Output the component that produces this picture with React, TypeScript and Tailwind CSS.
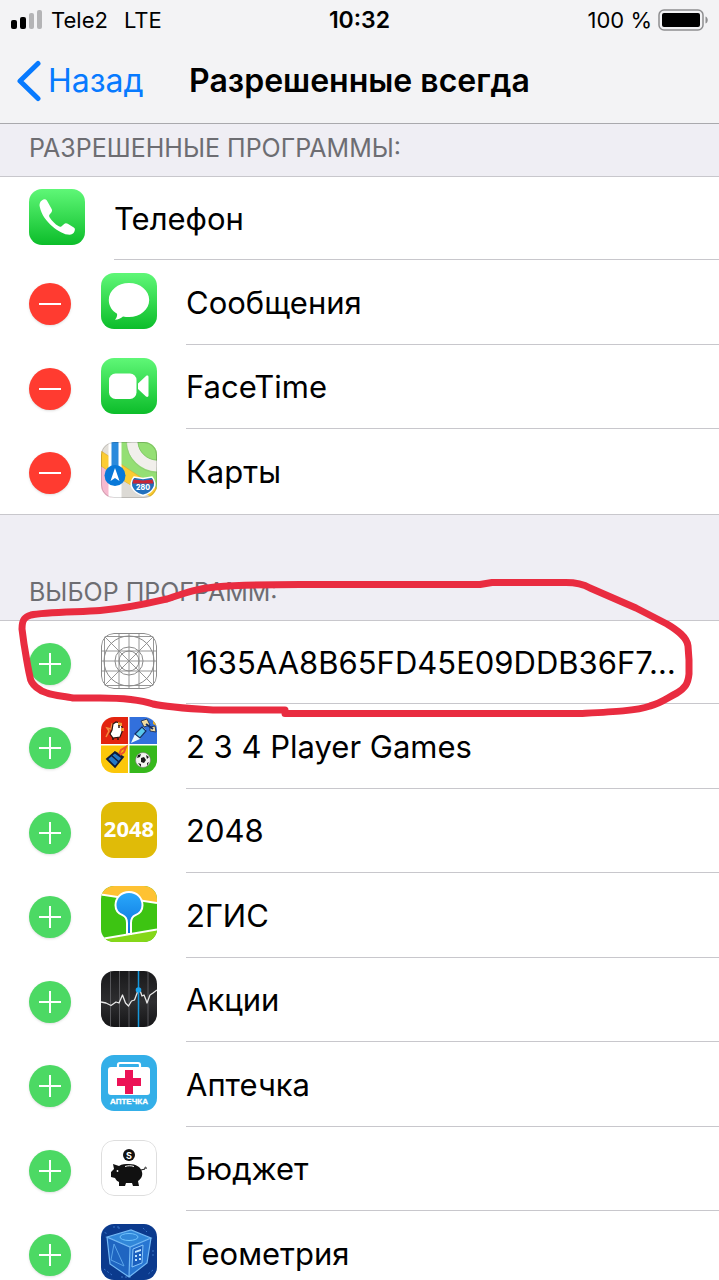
import React from "react"

interface App {
    name: string
    icon: React.ReactNode
}

const clip = "size-14 shrink-0 rounded-[13px]"

const GreenDefs = ({ id }: { id: string }) => (
    <defs>
        <linearGradient id={id} x1="0" y1="0" x2="0" y2="1">
            <stop offset="0" stopColor="#5ff777" />
            <stop offset="1" stopColor="#0cbd2a" />
        </linearGradient>
    </defs>
)

const PhoneIcon = () => (
    <svg viewBox="0 0 56 56" className={clip} aria-hidden="true">
        <GreenDefs id="phone" />
        <rect width="56" height="56" fill="url(#phone)" />
        <path d="M15.5 10.2C12 10.8 9.9 14 10.8 18c1.6 7.6 6.6 14.4 12.7 19.5 5.4 4.5 11.6 8.3 17.3 8.3 2.800 0 4.9-2.3 5.1-5.2.1-1.200-.5-1.800-1.500-2.400l-5.600-3.400c-1.500-.9-2.700-.7-3.900.4l-2.300 2c-.9.8-2 .7-3.200-.1-3.200-2.100-6.600-5.400-8.700-8.700-.8-1.200-.8-2.200.1-3.200l1.500-1.800c.9-1.100 1-2.300.2-3.600l-3.900-7.100c-.8-1.500-1.500-2.700-3.100-2.500z" fill="#fff" />
    </svg>
)

const MessagesIcon = () => (
    <svg viewBox="0 0 56 56" className={clip} aria-hidden="true">
        <GreenDefs id="messages" />
        <rect width="56" height="56" fill="url(#messages)" />
        <path d="M28 10C16.8 10 7.8 17.4 7.8 27c0 5.8 3.2 10.8 8.3 13.8.2 2.4-.5 4.5-2.2 5.9 3.2-.1 6-1.3 8.1-3.3 1.9.4 3.9.6 6 .6 11.2 0 20.2-7.4 20.2-17S39.2 10 28 10z" fill="#fff" />
    </svg>
)

const FaceTimeIcon = () => (
    <svg viewBox="0 0 56 56" className={clip} aria-hidden="true">
        <GreenDefs id="facetime" />
        <rect width="56" height="56" fill="url(#facetime)" />
        <rect x="8" y="15.5" width="27.5" height="25.5" rx="6.5" fill="#fff" />
        <path d="M37 25.5l8-7.400c1-.9 2.500-.5 2.500.9v18.500c0 1.400-1.500 1.800-2.500.9L37 31z" fill="#fff" />
    </svg>
)

const MapsIcon = () => (
    <svg viewBox="0 0 56 56" className={clip} aria-hidden="true">
        <rect width="56" height="56" fill="#e2dfd9" />
        <path d="M20 0h36v48L20 24z" fill="#94df74" />
        <path d="M0 24l20 12v20H0z" fill="#f6b9cf" />
        <path d="M0 9l56 37v10h-7L0 24z" fill="#fbcc33" stroke="#dcae32" strokeWidth=".7" />
        <path d="M20 38l32 18H20z" fill="#dcdad5" />
        <path d="M31 0a26 26 0 0 0 25 24" fill="none" stroke="#f1efeb" strokeWidth="11" />
        <path d="M37 0a19 19 0 0 0 19 18V0z" fill="#94df74" stroke="#77b862" strokeWidth=".6" />
        <path d="M25.5 0A31 31 0 0 0 56 30.5" fill="none" stroke="#8cbf77" strokeWidth=".6" />
        <path d="M7.5 0h13v56h-13z" fill="#fff" />
        <path d="M10.5 0h7v34h-7z" fill="#2a8adc" />
        <circle cx="14" cy="33.5" r="10.5" fill="#0878d8" />
        <path d="M14 26l4.500 13L14 36l-4.500 3z" fill="#fff" />
        <path d="M33 35l9 1.500 9-1.500c3 3 4 9 1 12-2 4-6 5-10 6.500-4-1.500-8-2.500-10-6.500-3-3-2-9 1-12z" fill="#2170bd" stroke="#fff" strokeWidth="1.5" />
        <path d="M32.500 37.500l9.500 1 9.500-1 1 4h-21z" fill="#c72736" />
        <text x="42" y="48" textAnchor="middle" fontFamily="Inter, sans-serif" fontSize="7" fontWeight="800" fill="#fff">280</text>
        <rect x=".5" y=".5" width="55" height="55" rx="12.5" fill="none" stroke="#000" strokeOpacity=".15" />
    </svg>
)

const PlaceholderIcon = () => (
    <svg viewBox="0 0 56 56" className={clip} fill="none" stroke="#8b8b8b" aria-hidden="true">
        <rect x=".5" y=".5" width="55" height="55" rx="12.5" fill="#fff" />
        <path d="M3.5 3v50M18 0v56M28 0v56M38 0v56M52.5 3v50M3 3.5h50M0 18h56M0 28h56M0 38h56M3 52.5h50M4 4l48 48M52 4L4 52" strokeWidth=".9" />
        <circle cx="28" cy="28" r="25" />
        <circle cx="28" cy="28" r="14" />
        <circle cx="28" cy="28" r="10" />
    </svg>
)

const PlayerGamesIcon = () => (
    <svg viewBox="0 0 56 56" className={clip} aria-hidden="true">
        <rect width="56" height="56" fill="#fff" />
        <path d="M0 0h27v27H0z" fill="#e3240f" />
        <path d="M28.5 0H56v27H28.500z" fill="#3270dc" />
        <path d="M0 28.5h27V56H0z" fill="#fcc70a" />
        <path d="M28.5 28.5H56V56H28.500z" fill="#36b81c" />
        {/* chicken */}
        <path d="M5 20l3-6-2-3 4 1 1-5 3 2" fill="none" stroke="#f58b3d" strokeWidth="1.5" />
        <path d="M12 7l3-2 4 1 2 4v5l-2 5-7 1-3-4 2-4z" fill="#fff" stroke="#2d1410" strokeWidth="1.2" />
        <path d="M17 5l4 1v3h-4zM20 11h3v3h-3z" fill="#f0a13a" />
        <path d="M18 8v3M12 21v2M17 21v2" stroke="#2d1410" strokeWidth="1.5" />
        {/* rocket and blocks */}
        <path d="M30 26l4-9 8-7 3 3-6 9z" fill="#eaf8ff" />
        <path d="M34 17l7-7 4 4-6 7z" fill="#59c7ed" stroke="#142e65" strokeWidth="1.2" />
        <path d="M40 4l6-2 3 6-6 2zM49 10l5-1 1 6-6-1z" fill="#f4dc9f" stroke="#27385f" />
        <path d="M47 1l5 1v5l4 2V0h-8z" fill="#e9ad21" />
        <path d="M45 7l7 5" stroke="#172e65" strokeWidth="2" />
        {/* car */}
        <path d="M6 42l8-7 8 5-8 10z" fill="#2679c7" stroke="#101c39" strokeWidth="1.8" />
        <path d="M10 38l8 7M13 35l8 6" stroke="#101c39" strokeWidth="1.5" />
        <path d="M18 37l2-4 5-3-2 5-4 3" fill="none" stroke="#ed5428" strokeWidth="2" />
        {/* ball */}
        <circle cx="42" cy="43" r="7.5" fill="#f4f4f1" stroke="#72736b" strokeWidth=".6" />
        <path d="M40 41l3-1 2 3-2 3-3-1zM37 38l3-1-1 3-3 1zM45 38l3 2-2 2zM37 46l3 1v3zM46 46l2-1-2 4z" fill="#1a1a1a" />
    </svg>
)

const Icon2048 = () => (
    <svg viewBox="0 0 56 56" className={clip} aria-hidden="true">
        <rect width="56" height="56" fill="#e0bb08" />
        <text x="28" y="35" textAnchor="middle" fontFamily="Open Sans, sans-serif" fontSize="22" fontWeight="700" fill="#fff">2048</text>
    </svg>
)

const GisIcon = () => (
    <svg viewBox="0 0 56 56" className={clip} aria-hidden="true">
        <defs>
            <linearGradient id="pin" x1="0" y1="0" x2="0" y2="1">
                <stop offset="0" stopColor="#2aa9fb" />
                <stop offset="1" stopColor="#0a71dc" />
            </linearGradient>
        </defs>
        <rect width="56" height="56" fill="#3dc412" />
        <path d="M0 0h56v17L0 9z" fill="#fec233" />
        <path d="M0 53l56-9v12H0z" fill="#85d719" />
        <path d="M0 8.5L56 17M0 53l56-9.5" stroke="#fff" strokeWidth="2" />
        <path d="M28 6c-8 0-13.5 6-13.5 13.2 0 5 3 8.300 7 10C24.500 30.500 26 33 26 37v11h4V37c0-4 1.500-6.500 4.500-7.800 4-1.700 7-5 7-10C41.500 12 36 6 28 6z" fill="url(#pin)" stroke="#fff" strokeWidth="2" />
    </svg>
)

const StocksIcon = () => (
    <svg viewBox="0 0 56 56" className={clip} aria-hidden="true">
        <defs>
            <linearGradient id="stocks" x1="0" y1="0" x2="0" y2="1">
                <stop offset="0" stopColor="#19191b" />
                <stop offset=".55" stopColor="#2e2e30" />
                <stop offset="1" stopColor="#151517" />
            </linearGradient>
        </defs>
        <rect width="56" height="56" fill="url(#stocks)" />
        <path d="M9.5 0v56M18.5 0v56M28 0v56M47 0v56" stroke="#66666a" strokeWidth=".8" />
        <path d="M37.5 0v56" stroke="#1698dc" strokeWidth="1.5" />
        <path d="M0 31l5 1 5 2.500 5-3.500 3 1 3.500-8 3 8 3 3 3-5 3-1 3-8 2-3 2.500 7 2-1 2 5 1 3 3-8 3-2 4-3" fill="none" stroke="#e8e8e8" strokeWidth="1.3" strokeLinejoin="round" />
        <circle cx="37.5" cy="19" r="2.8" fill="#1ba4ee" />
    </svg>
)

const MedkitIcon = () => (
    <svg viewBox="0 0 56 56" className={clip} aria-hidden="true">
        <rect width="56" height="56" fill="#34afe8" />
        <path d="M17 13v-3q0-2 2-2h18q2 0 2 2v3" fill="none" stroke="#fff" strokeWidth="2.2" />
        <rect x="7" y="12" width="42" height="28" rx="3" fill="#fff" />
        <path d="M24 15h8v8h8v8h-8v8h-8v-8h-8v-8h8z" fill="#ec1256" />
        <text x="28" y="49" textAnchor="middle" fontFamily="Liberation Sans, sans-serif" fontSize="8" fontWeight="700" fill="#fff" stroke="#fff" strokeWidth=".3">АПТЕЧКА</text>
    </svg>
)

const BudgetIcon = () => (
    <svg viewBox="0 0 56 56" className={clip} aria-hidden="true">
        <rect x=".5" y=".5" width="55" height="55" rx="12.5" fill="#fff" stroke="#dedede" />
        <circle cx="28" cy="15" r="6" fill="#111" />
        <text x="28" y="18.5" textAnchor="middle" fontFamily="Inter, sans-serif" fontSize="9" fontWeight="700" fill="#fff">S</text>
        <path d="M12 24l6 2c3-2 6-2 10-2 7 0 12 3 13 8 1 4-1 7-4 9l1 5h-6l-1-3h-6l-1 3h-6v-4c-2-1-3-2-4-4l-4-1v-5l3-3z" fill="#111" />
        <path d="M40 30l4-1c-1-2 2-3 1 0" fill="none" stroke="#111" />
        <path d="M24 26.500c3-1 6-1 9 0" fill="none" stroke="#fff" />
        <circle cx="16.5" cy="31" r=".9" fill="#fff" />
    </svg>
)

const GeometryIcon = () => (
    <svg viewBox="0 0 56 56" className={clip} aria-hidden="true">
        <rect width="56" height="56" fill="#0b3a8d" />
        <path d="M0 7l7 3M12 3h8M42 4l4 4M52 26v8M3 45l8 6M20 53h10M52 46l-6 5M18 3v3" stroke="#3974c6" strokeDasharray="2 2" />
        <path d="M6 13l24-7 20 8-21 9z" fill="#3187d9" />
        <path d="M6 13l23 10-1 30L9 40z" fill="#1f65c1" />
        <path d="M50 14L29 23l-1 30 18-14z" fill="#2876d2" />
        <path d="M6 13l24-7 20 8-21 9zM6 13l3 27 19 13 18-14 4-25M29 23l-1 30" fill="none" stroke="#72b8f5" strokeWidth="1.2" />
        <ellipse cx="28" cy="13" rx="9" ry="3.5" fill="none" stroke="#70c2fb" />
        <path d="M13 20l-3 16 13 6z" fill="none" stroke="#5ba4e9" />
        <path d="M32 25l10-4-1 18-10 4z" fill="#1b5fbe" stroke="#8bc8fa" />
        <path d="M34 27l6-2v2l-6 2zM34 31h2v2h-2zM38 30h2v2h-2zM34 35h2v2h-2zM38 34h2v2h-2z" fill="#c0e4fe" />
    </svg>
)

const allowed: App[] = [
    { name: "Сообщения", icon: <MessagesIcon /> },
    { name: "FaceTime", icon: <FaceTimeIcon /> },
    { name: "Карты", icon: <MapsIcon /> },
]

const available: App[] = [
    { name: "1635AA8B65FD45E09DDB36F7…", icon: <PlaceholderIcon /> },
    { name: "2 3 4 Player Games", icon: <PlayerGamesIcon /> },
    { name: "2048", icon: <Icon2048 /> },
    { name: "2ГИС", icon: <GisIcon /> },
    { name: "Акции", icon: <StocksIcon /> },
    { name: "Аптечка", icon: <MedkitIcon /> },
    { name: "Бюджет", icon: <BudgetIcon /> },
    { name: "Геометрия", icon: <GeometryIcon /> },
]

const rowClass = "flex h-[84px] pl-[29px] first:h-[83px] even:h-[85px]"
const nameClass = "flex min-w-0 flex-1 items-center border-b border-[#c8c7cc] pt-0.5 text-[31px] whitespace-nowrap group-last:border-b-0"

const Row = ({ app, action }: { app: App, action: "add" | "remove" }) => (
    <li className={`group ${rowClass}`}>
        <div className="flex items-center gap-[30px] pr-[29px] pb-[3px]">
            <button
                type="button"
                aria-label={`${action === "add" ? "Добавить" : "Удалить"} ${app.name}`}
                className={`mt-1.5 grid size-[42px] place-items-center rounded-full shadow-sm ${action === "add" ? "bg-[#4cd964]" : "bg-[#ff3b30]"}`}
            >
                <svg viewBox="0 0 22 22" className="size-[22px]" stroke="#fff" strokeWidth="2" aria-hidden="true">
                    <path d={action === "add" ? "M0 11h22M11 0v22" : "M0 11h22"} />
                </svg>
            </button>
            {app.icon}
        </div>
        <span className={nameClass}>{app.name}</span>
    </li>
)

const StatusBar = () => (
    <div className="grid h-10 grid-cols-3 items-center px-[11px] text-[22px]">
        <div className="flex items-center gap-2">
            <svg width="32" height="20" viewBox="0 0 32 20" aria-hidden="true">
                <rect x="0" y="10" width="6" height="9" rx="2" />
                <rect x="9" y="7" width="6" height="12" rx="2" />
                <rect x="18" y="3" width="5" height="16" rx="2" fill="#b4b4b6" />
                <rect x="26" y="0" width="5" height="19" rx="2" fill="#b4b4b6" />
            </svg>
            <span>Tele2</span>
            <span className="ml-2">LTE</span>
        </div>
        <time className="text-center text-[23px] font-semibold">10:32</time>
        <div className="flex items-center justify-end gap-[6px] whitespace-nowrap">
            <span>100 %</span>
            <svg width="50" height="22" viewBox="0 0 50 22" aria-hidden="true">
                <rect x="1" y="1" width="44" height="20" rx="5" fill="none" stroke="#8e8e90" strokeWidth="1.5" />
                <rect x="4" y="4" width="38" height="14" rx="2" />
                <path d="M47.5 7.500c3 1 3 6 0 7z" fill="#8e8e90" />
            </svg>
        </div>
    </div>
)

export default function App() {
    return (
        <div className="h-screen overflow-hidden bg-white font-[Inter,'Liberation_Sans',sans-serif] text-[32px] text-black">
            <header className="h-[124px] border-b border-[#a9a9ad] bg-[#f3f3f5]">
                <StatusBar />
                <nav className="grid grid-cols-[1fr_auto_1fr] items-center px-4 pt-4 leading-[50px]">
                    <a href="#back" className="flex items-center gap-1.5 text-[#077aff]">
                        <svg width="26" height="42" viewBox="0 0 26 42" fill="none" stroke="currentColor" strokeWidth="5" strokeLinecap="round" strokeLinejoin="round" aria-hidden="true">
                            <path d="M22 3.500L4 21l18 17.500" />
                        </svg>
                        Назад
                    </a>
                    <h1 className="font-semibold">Разрешенные всегда</h1>
                </nav>
            </header>
            <main>
                <section>
                    <h2 className="h-[53px] border-b border-[#c8c7cc] bg-[#efeef4] pl-[29px] text-[25px] leading-[48px] text-[#6d6d72]">РАЗРЕШЕННЫЕ ПРОГРАММЫ:</h2>
                    <ul className="border-b border-[#c8c7cc]">
                        <li className={rowClass}>
                            <div className="flex items-center pr-[29px] pb-[3px]"><PhoneIcon /></div>
                            <span className={nameClass}>Телефон</span>
                        </li>
                        {allowed.map(app => <Row key={app.name} app={app} action="remove" />)}
                    </ul>
                </section>
                <section className="relative">
                    <h2 className="flex h-[106px] items-end border-b border-[#c8c7cc] bg-[#efeef4] pb-[9px] pl-[29px] text-[25px] leading-[38px] text-[#6d6d72]">ВЫБОР ПРОГРАММ:</h2>
                    <ul>
                        {available.map(app => <Row key={app.name} app={app} action="add" />)}
                    </ul>
                    {/* hand drawn marker around the unknown app */}
                    <svg viewBox="0 0 719 220" className="pointer-events-none absolute top-0 left-0 w-full" fill="none" stroke="#e92c40" strokeWidth="7" strokeLinecap="round" strokeLinejoin="round" aria-hidden="true">
                        <path d="M31 100C44 97 80 97 100 95.500C130 93 150 88 167 84C185 78 195 74 215 72C240 70 270 69.500 300 69.500H480L492 67.500H566C577 67.500 583 69 590 73L636 93L667 109C677 115 687 122 688 131L689 145V159C688 169 685 173 677 178C667 183 662 188 650 191C636 196 610 197 580 198.500H285V195H213C180 193 165 192 153 189C138 184 120 183 100 183H73C65 181 55 181 47 178C40 176 31 170 30 162C27 149 25 134 24 129L22 114C22 104 25 102 31 100Z" />
                    </svg>
                </section>
            </main>
        </div>
    )
}
